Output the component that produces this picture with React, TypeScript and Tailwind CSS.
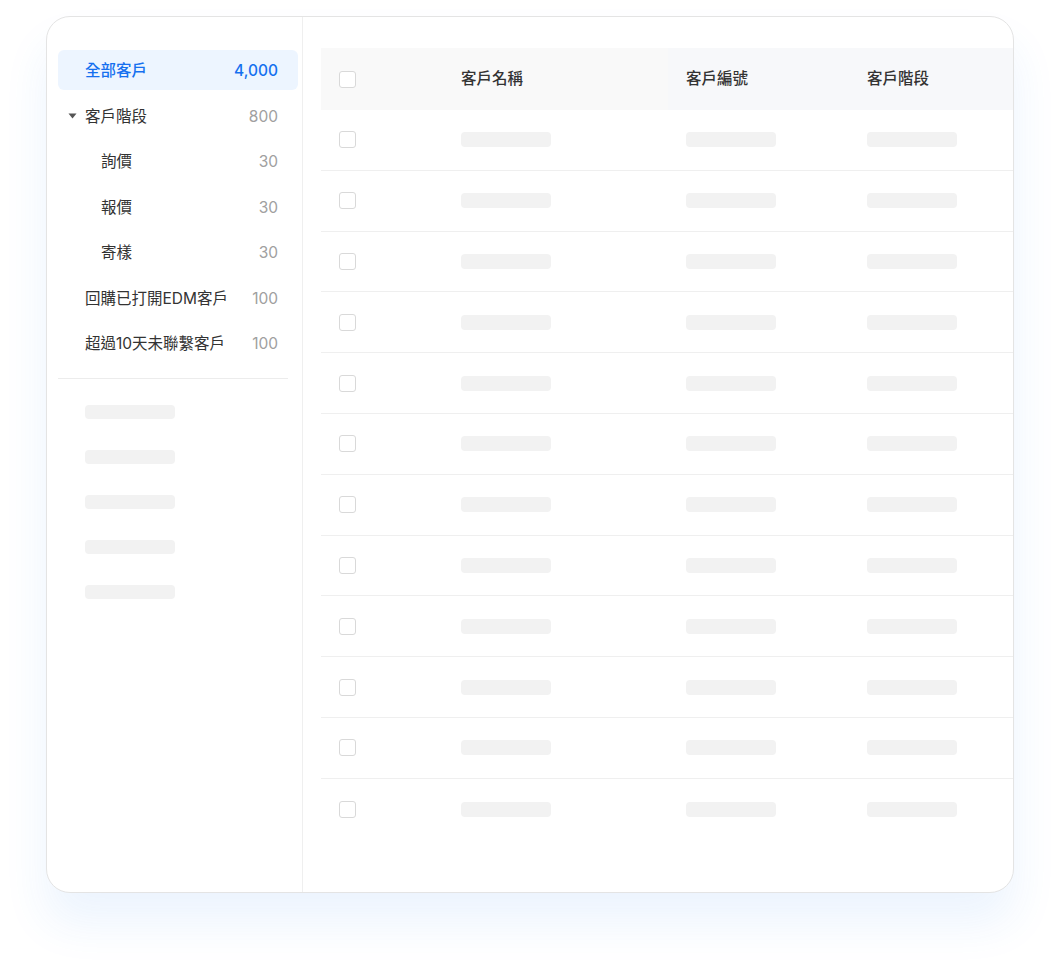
const groups = [
  { label: '全部客戶', count: '4,000', active: true },
  { label: '客戶階段', count: '800', caret: true },
  { label: '詢價', count: '30', sub: true },
  { label: '報價', count: '30', sub: true },
  { label: '寄樣', count: '30', sub: true },
  { label: '回購已打開EDM客戶', count: '100' },
  { label: '超過10天未聯繫客戶', count: '100' },
];

const rows = Array.from({ length: 12 }, (_, i) => i);

function Checkbox() {
  return <div className="w-[17px] h-[17px] rounded-[3px] border border-[#d9d9d9] bg-white" />;
}

function Skeleton() {
  return <div className="w-[90px] h-[15px] rounded-[4px] bg-[#f2f2f2]" />;
}

export default function App() {
  return (
    <div
      className="w-[1061px] h-[970px] bg-white pl-[46px] pt-[16px]"
      style={{ fontFamily: 'Inter, "Noto Sans CJK TC", sans-serif' }}
    >
      <div className="w-[968px] h-[877px] rounded-[24px] border border-[#e4e4e4] bg-white overflow-hidden flex shadow-[0_30px_45px_rgba(40,130,240,0.09)]">
        {/* Sidebar */}
        <div className="w-[256px] shrink-0 border-r border-[#efefef] pl-[11px] pr-[4px] pt-[30px]">
          {groups.map((g) => (
            <div key={g.label} className="h-[45.5px] flex items-center">
              <div
                className={`h-10 w-full rounded-[6px] flex items-center justify-between pr-[20px] pt-[2px] text-[15.5px] ${
                  g.active ? 'bg-[#edf5ff] text-[#1570ef] font-medium' : 'text-[#333]'
                } ${g.sub ? 'pl-[43px]' : 'pl-[27px]'}`}
              >
                <div className="relative flex items-center">
                  {g.caret && (
                    <svg
                      className="absolute left-[-17px] top-1/2 -translate-y-1/2"
                      width="9"
                      height="6"
                      viewBox="0 0 9 6"
                    >
                      <path d="M0.5 0.5h8L4.5 5.5z" fill="#555" />
                    </svg>
                  )}
                  <span>{g.label}</span>
                </div>
                <span className={g.active ? 'text-[#1570ef]' : 'text-[#a0a0a0]'}>{g.count}</span>
              </div>
            </div>
          ))}
          <div className="mt-[12px] mr-[10px] border-t border-[#ececec]" />
          <div className="pt-[26px] pl-[27px] flex flex-col gap-[31px]">
            {[0, 1, 2, 3, 4].map((i) => (
              <div key={i} className="w-[90px] h-[14px] rounded-[4px] bg-[#f2f2f2]" />
            ))}
          </div>
        </div>

        {/* Table */}
        <div className="flex-1 min-w-0 pl-[18px] pt-[31px]">
          <div className="h-[62px] flex items-center text-[15.5px] text-[#333] font-medium">
            <div className="w-[122px] h-full shrink-0 bg-[#f9f9f9] pl-[18px] flex items-center">
              <Checkbox />
            </div>
            <div className="w-[225px] h-full shrink-0 bg-[#f9f9f9] pl-[18px] flex items-center">客戶名稱</div>
            <div className="w-[181px] h-full shrink-0 bg-[#f7f8fa] pl-[18px] flex items-center">客戶編號</div>
            <div className="flex-1 h-full bg-[#f7f8fa] pl-[18px] flex items-center">客戶階段</div>
          </div>
          {rows.map((i) => (
            <div
              key={i}
              className={`h-[60.8px] flex items-center ${i < 11 ? 'border-b border-[#efefef]' : ''}`}
            >
              <div className="w-[122px] shrink-0 pl-[18px]">
                <Checkbox />
              </div>
              <div className="w-[225px] shrink-0 pl-[18px]">
                <Skeleton />
              </div>
              <div className="w-[181px] shrink-0 pl-[18px]">
                <Skeleton />
              </div>
              <div className="flex-1 pl-[18px]">
                <Skeleton />
              </div>
            </div>
          ))}
        </div>
      </div>
    </div>
  );
}
